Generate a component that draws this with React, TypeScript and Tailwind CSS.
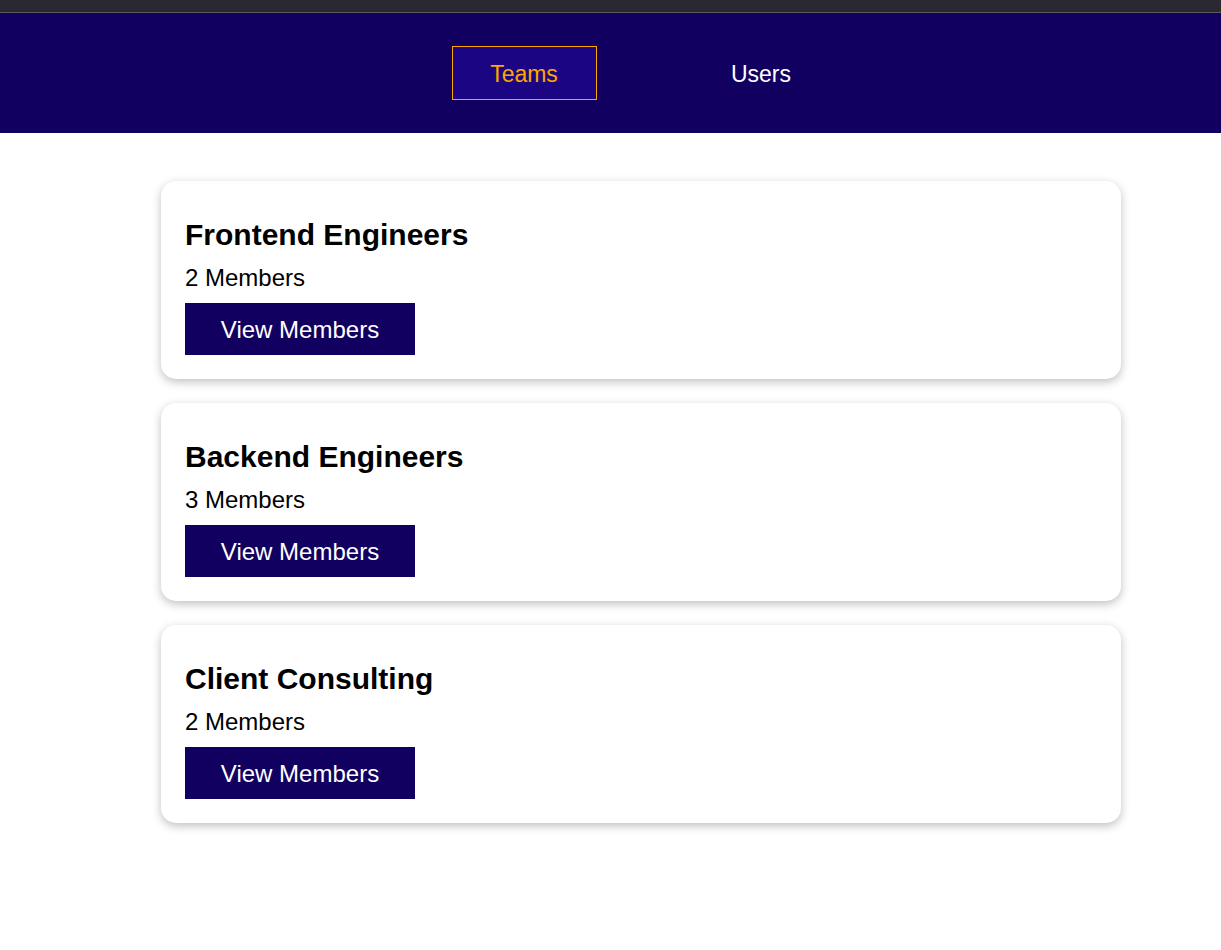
import React from "react";

const teams = [
  { name: "Frontend Engineers", count: 2 },
  { name: "Backend Engineers", count: 3 },
  { name: "Client Consulting", count: 2 },
];

export default function App() {
  return (
    <div className="min-h-[950px] bg-white" style={{ fontFamily: '"Liberation Sans", Arial, sans-serif' }}>
      <div className="h-[12px] bg-[#2a2932]" />
      <div className="h-[1px] bg-[#5a5a60]" />
      <nav className="h-[120px] bg-[#120060] flex items-center justify-center pl-[64px]">
        <div className="flex items-center gap-[92px]">
          <button className="w-[145px] h-[54px] border border-[#ffa500] bg-[#1b0582] text-[#ffa500] text-[23px] leading-none pt-[2px]">
            Teams
          </button>
          <button className="w-[145px] h-[54px] text-white text-[23px] leading-none pt-[2px]">
            Users
          </button>
        </div>
      </nav>
      <main className="pt-[48px] pl-[161px] flex flex-col gap-[24px]">
        {teams.map((t) => (
          <div
            key={t.name}
            className="w-[960px] bg-white rounded-[15px] shadow-[0_3px_10px_rgba(0,0,0,0.25)] pt-[36px] pb-[24px] px-[24px]"
          >
            <h2 className="text-[30px] leading-[35px] font-bold text-black">{t.name}</h2>
            <p className="mt-[12px] text-[24px] leading-[28px] text-black">{t.count} Members</p>
            <button className="mt-[11px] w-[230px] h-[52px] bg-[#120060] text-white text-[24px] leading-none pt-[2px]">
              View Members
            </button>
          </div>
        ))}
      </main>
    </div>
  );
}
